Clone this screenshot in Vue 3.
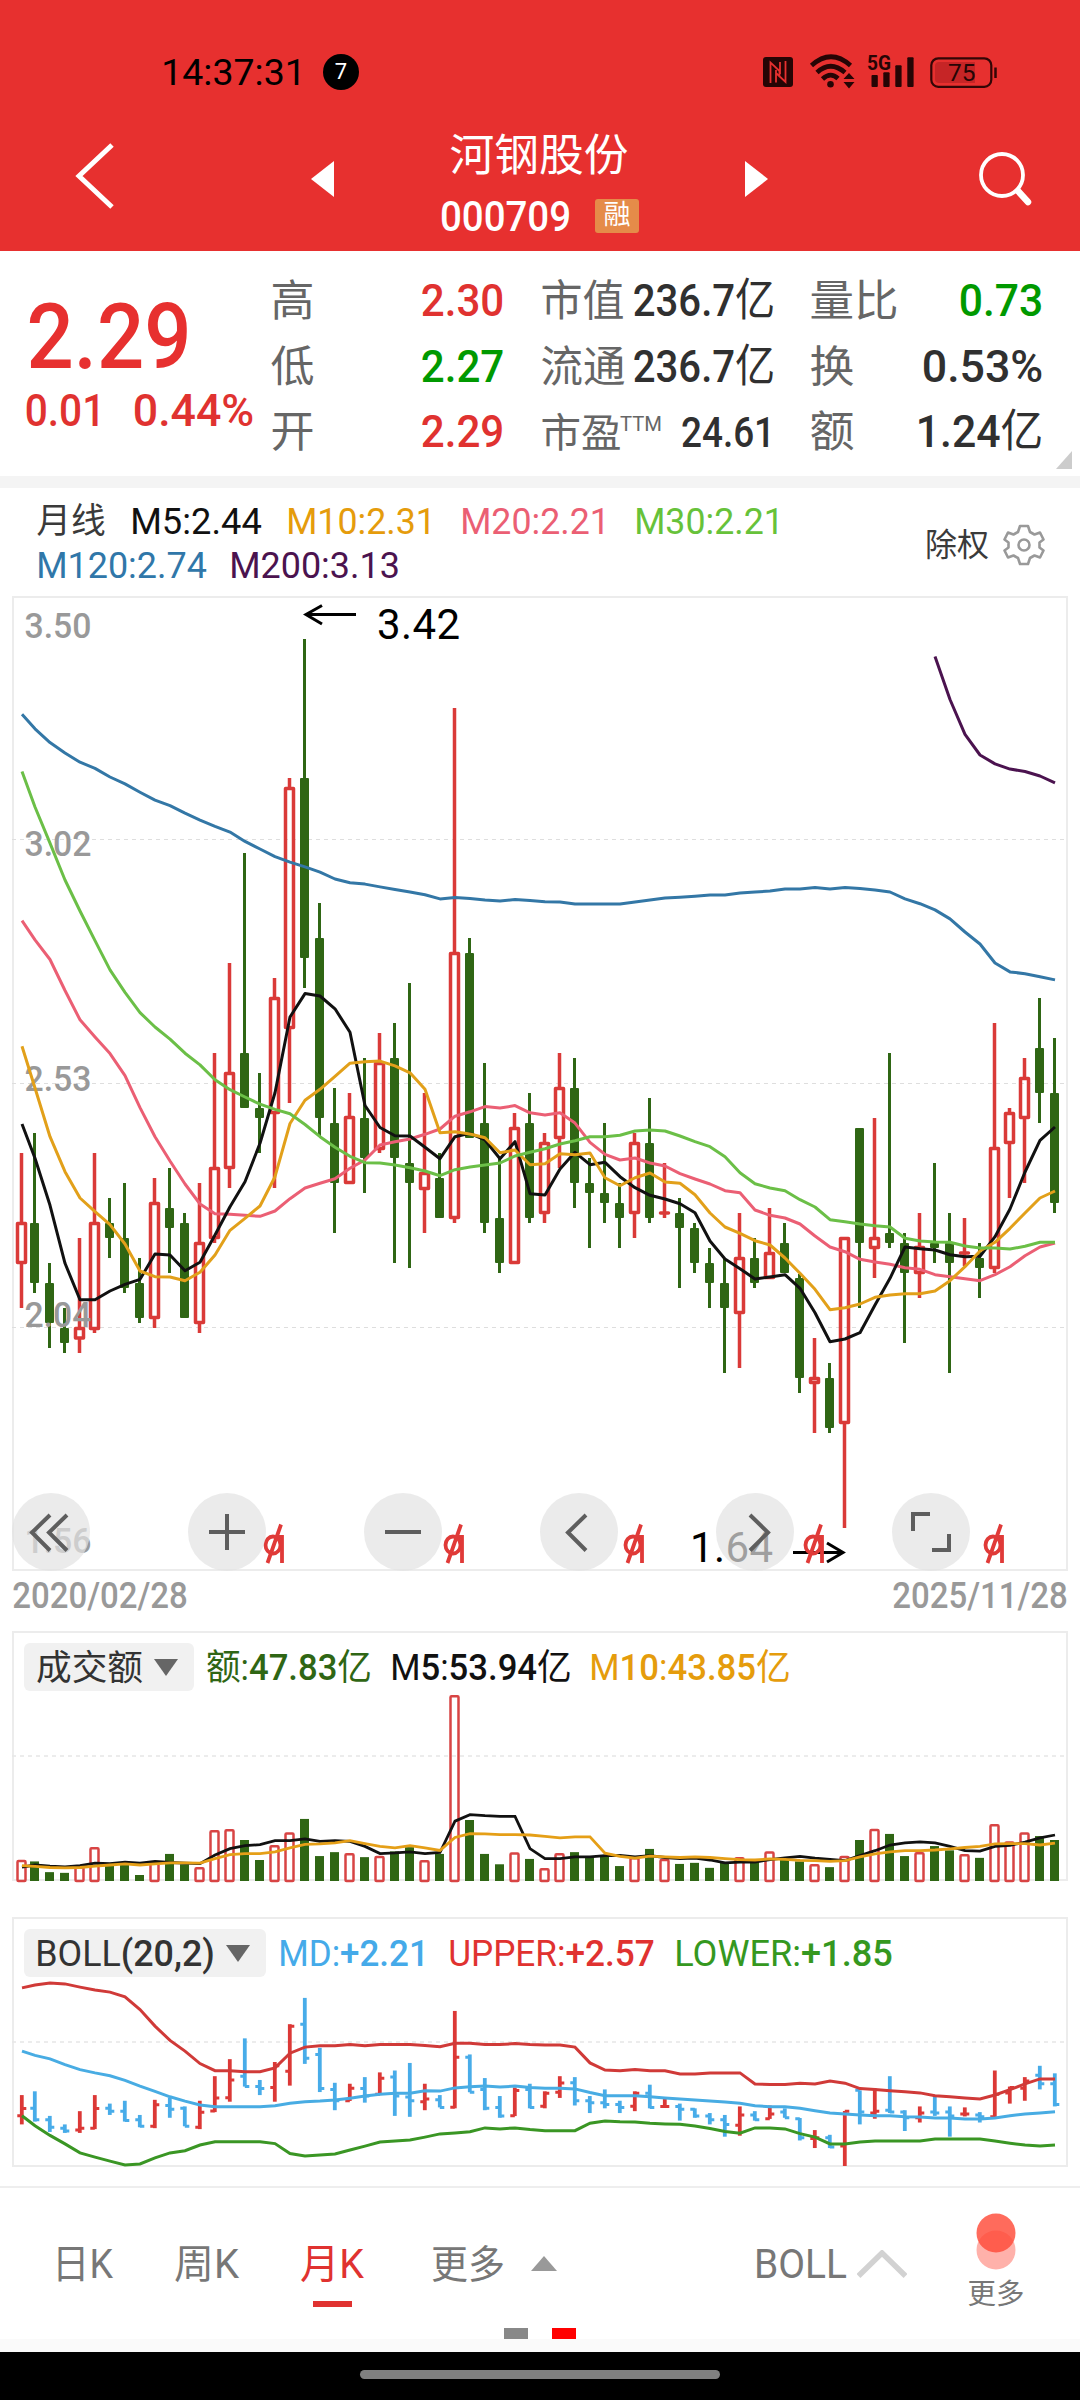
<script setup>
import { h } from 'vue'

// Single-line label fitted to a given width; its box is the cap-height box of the text.
const Fit = (p) => {
  const s = Number(p.s)
  const w = Number(p.w)
  const b = p.b === undefined ? s * 0.05 : Number(p.b)
  const cap = Math.round(s * 0.711)
  const parts = String(p.t).match(/[\d.,+%/()]+|[^\d.,+%/()]+/g)
  return h(
    'svg',
    { width: w, height: cap, style: 'overflow:visible;display:block;flex:none' },
    [
      h(
        'text',
        {
          x: -b,
          y: cap,
          textLength: w + 2 * b,
          lengthAdjust: 'spacingAndGlyphs',
          fill: p.c,
          'font-size': s,
          'font-family': 'Roboto, "Noto Sans CJK SC", sans-serif'
        },
        parts.map((x) => h('tspan', { 'font-weight': p.bold !== undefined && /\d/.test(x) ? 500 : 400 }, x))
      )
    ]
  )
}
Fit.props = ['t', 'w', 's', 'c', 'b', 'bold']

const RED = '#e03230'
const GREEN = '#009900'
const INK = '#303030'

// [kind, high, body top, body bottom, low]
const candles = [
  ['r',1153,1222,1264,1308],['g',1133,1223,1283,1293],['g',1263,1283,1323,1348],['g',1308,1328,1343,1353],['r',1238,1327,1339.5,1353],
  ['r',1153,1222,1330,1333],['g',1198,1223,1238,1258],['g',1183,1238,1288,1293],['g',1258,1283,1318,1323],['r',1178,1202,1319,1328],
  ['g',1168,1208,1228,1273],['g',1213,1223,1318,1318],['r',1183,1242,1324,1333],['r',1053,1167,1239,1243],['r',963,1072,1169,1188],
  ['g',853,1053,1108,1108],['g',1073,1108,1118,1153],['r',978,997,1114,1188],['r',778,787,1029,1103],['g',639,778,958,988],
  ['g',903,938,1118,1137],['g',1088,1123,1183,1233],['r',1093,1116,1184,1184],['g',1058,1118,1158,1193],['r',1033,1062,1150,1153],
  ['g',1023,1058,1158,1263],['g',983,1163,1183,1268],['r',1093,1172,1190,1233],['g',1153,1178,1218,1218],['r',708,952,1219,1223],
  ['g',938,953,1138,1138],['g',1063,1123,1223,1233],['g',1158,1218,1263,1273],['r',1113,1127,1264,1264],['g',1093,1123,1218,1223],
  ['r',1133,1142,1214,1223],['r',1053,1087,1139,1168],['g',1058,1088,1183,1208],['g',1158,1183,1193,1248],['g',1123,1193,1203,1223],
  ['g',1183,1203,1218,1248],['r',1133,1142,1214,1238],['g',1098,1143,1218,1223],['r',1163,1211.5,1214.5,1218],['g',1198,1213,1228,1288],
  ['g',1223,1228,1263,1273],['g',1248,1263,1283,1308],['g',1258,1283,1308,1373],['r',1213,1257,1314,1368],['g',1238,1258,1283,1288],
  ['r',1208,1252,1279,1279],['g',1223,1243,1273,1273],['g',1274,1278,1378,1393],['r',1338,1377,1384,1433],['g',1363,1378,1428,1433],
  ['r',1237,1237,1424,1528],['g',1128,1128,1243,1308],['r',1118,1237,1249,1278],['g',1053,1233,1243,1248],['g',1233,1243,1273,1343],
  ['r',1213,1246,1274,1298],['g',1163,1243,1248,1263],['g',1213,1243,1263,1373],['r',1218,1251.5,1254.5,1266],['g',1243,1258,1268,1298],
  ['r',1023,1147,1269,1273],['r',1108,1112,1144,1198],['r',1058,1077,1119,1183],['g',998,1048,1093,1123],['g',1038,1093,1203,1213]
]

const xAt = (i) => (i === 0 ? 21.5 : 19.5 + 15 * i)

const path = (ys, from = 0) => ys.map((y, k) => `${xAt(k + from) + 0.5},${y.toFixed(1)}`).join(' ')

const averages = [
  { color: '#eb5f74', from: 0, ys: [920.6,939.9,959.5,990.5,1019.8,1037,1053.6,1075.6,1107.6,1136.7,1161,1184,1204,1213.7,1214.3,1215.3,1216.3,1211,1198.7,1188,1183.3,1178.7,1168.3,1160,1145,1141.7,1139,1134.3,1129,1116.2,1111.8,1106.6,1108,1105.6,1112.8,1114.9,1112.8,1123.1,1142.3,1154.3,1160,1158,1163,1166,1173.7,1179,1184,1190.7,1192.7,1210,1215.3,1218,1224,1236,1247,1251.7,1259.3,1262,1264.3,1267.7,1269.3,1274.7,1276.7,1278.7,1280.7,1274.7,1266.7,1255.7,1247,1243] },
  { color: '#111111', from: 0, ys: [1124,1158.3,1205.3,1263.3,1299.7,1299.7,1291,1284.3,1279.3,1254,1255,1270.7,1262.3,1235,1206.7,1181.7,1143.3,1092.8,1017,993.6,996,1008.8,1032.2,1105.5,1127.5,1135.7,1136,1147.3,1158.7,1136.7,1133.3,1140,1158.7,1141.7,1193.7,1195,1169,1152.3,1164.7,1162.3,1176.7,1187.7,1195.3,1199,1203.7,1212.7,1241,1259,1268.7,1279,1277,1274.7,1288.3,1312.7,1341.7,1339,1332.7,1305,1278.3,1247,1248.7,1250,1254.7,1256.7,1256.3,1236.7,1209,1172,1140.3,1127] },
  { color: '#e2a01a', from: 0, ys: [1046.3,1088,1136.7,1171.7,1198,1211.7,1224.7,1244,1271,1276.7,1277,1280.7,1272.3,1255,1230.3,1218.3,1206,1176.7,1123.5,1100.3,1089.3,1076.3,1063.2,1061.8,1061.1,1065.9,1072.8,1089.3,1132.7,1131.7,1134,1137.7,1152.7,1150,1164.7,1163.7,1153.7,1154.7,1153,1177.7,1185.7,1177.7,1173,1182,1183.3,1194.7,1213,1227,1233.3,1240.7,1245,1258,1273.3,1289.3,1309.7,1307.7,1304,1297.3,1295,1293.7,1293.7,1291,1280.7,1266.7,1251,1242.3,1228.3,1213,1198,1191] },
  { color: '#6bbf47', from: 0, ys: [771.5,807,843.1,880,911,940.6,969.9,992.3,1012.6,1027,1039.1,1053.2,1064.9,1079.7,1089.7,1097,1104.2,1109.4,1113.8,1124.5,1136.7,1147.3,1156.3,1162.7,1163,1165,1167.7,1171,1175.7,1169.7,1167,1165,1163,1156,1152.3,1148.7,1144,1140.7,1136.7,1136.7,1135.3,1131,1130,1131,1136,1141.7,1146.7,1156.7,1172.7,1183.7,1188,1190.7,1199.7,1207,1219.7,1221.7,1224,1225.7,1227,1238.3,1241,1242,1242.3,1246,1248,1248,1249,1246.3,1242.3,1242.3] },
  { color: '#3377a6', from: 0, ys: [714.3,728.8,742.6,752.9,762.2,768.4,777,783.9,792.2,800.1,805.6,813.2,820.1,826.3,832.1,841.4,849,856.6,862.1,866.9,872.1,879,882.7,884.1,886.9,889.6,892,894.8,898.9,897.5,898.6,900,901,899.6,900.6,901.7,902,904.1,904.1,904.1,904.1,902,900,897.9,897.2,896.2,895.1,895.1,893.1,892,891,888.9,888.9,887.6,888.9,887.6,888.6,890,892,898.9,903.7,909.9,918.9,932,944,963,971.9,973.7,976.8,979.9] },
  { color: '#4b134f', from: 61, ys: [656.5,699.5,734.3,755,763.9,769.1,771.5,776,782.9] }
]

const axis = [
  { t: '3.50', y: 638 },
  { t: '3.02', y: 856 },
  { t: '2.53', y: 1091 },
  { t: '2.04', y: 1326.5 },
  { t: '1.56', y: 1552.5 }
]

// Lower panes share one vertical unit: 2.8 units per pixel.
const low = (u) => 1620 + u / 2.8

const volumes = [672,676,706,708,690,636,688,685,714,680,655,684,692,589,586,616,672,631,595,557,661,650,653,664,661,648,636,673,655,211,560,655,684,651,669,695,653,650,662,662,689,664,641,669,683,680,694,680,664,678,648,670,676,684,692,661,616,585,599,661,650,633,645,656,666,572,620,595,605,616].map(low)
const volM5 = [692,686,689,691,688,681,682,678,681,676,679,681,682,658,640,632,629,618,618,613,620,618,620,634,654,652,649,654,651,563,545,548,550,550,640,668,668,663,663,660,659,663,660,665,668,667,672,680,678,678,671,666,662,667,670,674,660,646,630,624,621,624,634,646,647,634,631,622,610,602].map(low)
const volM10 = [688,690,693,694,693,689,686,683,686,683,680,680,681,668,657,654,654,649,638,628,627,624,618,626,634,638,632,638,645,609,598,599,601,601,602,606,610,607,607,653,662,667,661,663,665,663,665,668,671,672,669,670,673,674,676,674,663,655,649,646,646,644,641,637,634,627,626,626,630,625].map(low)

const upper = [1030,1022,1016,1019,1028,1036,1042,1055,1091,1137,1177,1207,1242,1262,1262,1265,1265,1254,1213,1196,1192,1192,1189,1192,1189,1189,1189,1191,1195,1185,1185,1189,1189,1186,1189,1190,1190,1196,1240,1260,1262,1259,1262,1262,1271,1271,1268,1268,1268,1299,1301,1301,1297,1299,1291,1297,1312,1315,1318,1321,1324,1332,1335,1338,1341,1330,1315,1299,1285,1285].map(low)
const middle = [1207,1219,1229,1245,1259,1268,1276,1289,1305,1320,1335,1347,1358,1363,1363,1363,1363,1360,1353,1349,1347,1344,1339,1333,1328,1325,1325,1318,1319,1310,1307,1305,1308,1305,1309,1311,1311,1313,1323,1332,1332,1332,1335,1338,1341,1344,1347,1350,1353,1360,1363,1363,1367,1374,1380,1383,1386,1388,1388,1391,1392,1394,1394,1397,1397,1394,1388,1383,1380,1377].map(low)
const lower = [1388,1416,1443,1467,1492,1504,1515,1526,1523,1506,1492,1486,1470,1461,1461,1461,1461,1466,1494,1501,1498,1495,1484,1473,1462,1459,1456,1448,1439,1436,1433,1422,1425,1422,1427,1430,1430,1430,1409,1403,1405,1406,1409,1411,1412,1417,1424,1432,1437,1422,1422,1425,1438,1448,1467,1467,1462,1459,1459,1459,1459,1453,1453,1453,1453,1459,1465,1470,1473,1470].map(low)

const bollY = (p) => 2166 - (1528 - p) * 0.1891
const ohlc = candles.map(([k, hi, top, bot, lo], i) => {
  const up = k === 'r'
  const a = bollY(up ? top + 1.5 : top)
  const b = bollY(up ? bot - 1.5 : bot)
  const x = xAt(i) + 0.3
  const open = up ? b : a
  const close = up ? a : b
  return {
    color: up ? '#dc3836' : '#48ace9',
    bar: `M${x} ${bollY(hi)}V${bollY(lo)}`,
    ticks: `M${x - 4.5} ${open}H${x}M${x} ${close}H${x + 4.5}`
  }
})

const stats = [
  [{ t: '高', w: 41 }, { t: '2.30', w: 79, c: RED }, { t: '市值', w: 81 }, { t: '236.7亿', w: 138, c: INK }, { t: '量比', w: 86 }, { t: '0.73', w: 80, c: GREEN }],
  [{ t: '低', w: 41 }, { t: '2.27', w: 79, c: GREEN }, { t: '流通', w: 82 }, { t: '236.7亿', w: 138, c: INK }, { t: '换', w: 42 }, { t: '0.53%', w: 117, c: INK }],
  [{ t: '开', w: 41 }, { t: '2.29', w: 79, c: RED }, { t: '市盈', w: 78, sup: 'TTM' }, { t: '24.61', w: 90, c: INK, s: 42 }, { t: '额', w: 42 }, { t: '1.24亿', w: 123, c: INK }]
]

const legendTop = [
  { t: '月线', w: 66, s: 35, c: '#3a3a3a' },
  { t: 'M5:2.44', w: 128, s: 36.5, c: '#111' },
  { t: 'M10:2.31', w: 146, s: 36.5, c: '#e59c0c' },
  { t: 'M20:2.21', w: 146, s: 36.5, c: '#eb5f74' },
  { t: 'M30:2.21', w: 146, s: 36.5, c: '#67c23a' }
]
const legendBottom = [
  { t: 'M120:2.74', w: 167, s: 36.5, c: '#3077a9' },
  { t: 'M200:3.13', w: 167, s: 36.5, c: '#4b134f' }
]

const controls = [
  'M38 22L20 39.500L38 57.500M55 22L37 39.500L55 57.500',
  'M39 21V57M21 39H57',
  'M21 39H57',
  'M46 22L28 39.500L46 57.500',
  'M34 22L52 39.500L34 57.500',
  'M38 21H21V38M57 41V57H40'
]
const marks = [264, 444, 624, 804, 984]
</script>

<template>
  <div class="screen">
    <header class="top">
      <div class="status">
        <Fit t="14:37:31" w="141" s="36.5" c="#000" />
        <span class="badge">7</span>
        <svg class="sys" width="236" height="36" viewBox="762 54 236 36">
          <rect x="763" y="57" width="30" height="30" rx="3" fill="#260505" />
          <path d="M770.500 83V62.500L779.500 71V76M776 70V82.500M785.500 61V82L776.500 73.500M780 62V74" fill="none" stroke="#e7302f" stroke-width="1.800" />
          <g fill="none" stroke="#260505" stroke-width="4.700">
            <path d="M811.500 65.500Q831 48 850.500 65.500" />
            <path d="M817 72.500Q830.500 60 845 72.500" />
            <path d="M822.500 79Q830.500 71.500 838 78.500" />
          </g>
          <circle cx="830.500" cy="84.300" r="3.300" fill="#260505" />
          <path d="M843.500 79L849 73L854.500 79ZM843.500 82L849 88.500L854.500 82Z" fill="#260505" />
          <text x="867" y="70" textLength="24" lengthAdjust="spacingAndGlyphs" font-size="20" font-weight="700" font-family="Roboto, sans-serif" fill="#260505">5G</text>
          <g fill="#260505">
            <rect x="871.500" y="75" width="6.300" height="12" rx="1" />
            <rect x="883.300" y="72.300" width="6.300" height="14.700" rx="1" />
            <rect x="895.300" y="65.300" width="6.300" height="21.700" rx="1" />
            <rect x="907.300" y="57.300" width="6.300" height="29.700" rx="1" />
          </g>
          <path d="M939 62H975V83H939Q935 83 935 79V66Q935 62 939 62Z" fill="#c62526" />
          <rect x="931.300" y="58.300" width="60" height="28.500" rx="7" fill="none" stroke="#330606" stroke-width="2.200" />
          <path d="M995.500 67.500V78" stroke="#330606" stroke-width="2.500" />
          <text x="948" y="81" textLength="27.500" lengthAdjust="spacingAndGlyphs" font-size="24.500" font-family="Roboto, sans-serif" fill="#260505">75</text>
        </svg>
      </div>
      <div class="titlebar">
        <svg class="back" width="48" height="74" viewBox="70 139 48 74"><path d="M112 145L79 176L112 207" fill="none" stroke="#fff" stroke-width="5" /></svg>
        <svg class="prev" width="24" height="36" viewBox="0 0 24 36"><path d="M24 0V36L1 18Z" fill="#fff" /></svg>
        <div class="name">
          <Fit t="河钢股份" w="176" s="44.500" c="#fff" b="1.500" />
          <div class="code">
            <Fit t="000709" w="127" s="42" c="#fff" bold />
            <span class="tag">融</span>
          </div>
        </div>
        <svg class="next" width="24" height="36" viewBox="0 0 24 36"><path d="M0 0V36L23 18Z" fill="#fff" /></svg>
        <svg class="search" width="56" height="60" viewBox="976 148 56 60">
          <circle cx="1002" cy="175" r="21" fill="none" stroke="#fff" stroke-width="3.800" />
          <path d="M1018 191L1028 202" stroke="#fff" stroke-width="6.500" stroke-linecap="round" />
        </svg>
      </div>
    </header>

    <section class="quote">
      <div class="price">
        <Fit t="2.29" w="156" s="90" c="#e7302f" bold />
        <div class="change">
          <Fit t="0.01" w="76" s="45" c="#e03230" bold />
          <Fit t="0.44%" w="117" s="45" c="#e03230" bold />
        </div>
      </div>
      <div class="stats">
        <div v-for="(row, r) in stats" :key="r" class="stat-row">
          <div v-for="g in 3" :key="g" class="stat">
            <div class="lab">
              <Fit :t="row[g * 2 - 2].t" :w="row[g * 2 - 2].w" :s="row[g * 2 - 2].sup ? 40 : 43.5" c="#666" b="1.500" />
              <Fit v-if="row[g * 2 - 2].sup" class="sup" t="TTM" w="40" s="20" c="#666" />
            </div>
            <Fit :t="row[g * 2 - 1].t" :w="row[g * 2 - 1].w" :s="row[g * 2 - 1].s || 45" :c="row[g * 2 - 1].c" bold />
          </div>
        </div>
      </div>
      <svg class="corner" width="16" height="18"><path d="M16 0V18H0Z" fill="#ccc" /></svg>
    </section>

    <section class="legend">
      <div class="legend-rows">
        <div class="legend-row"><Fit v-for="m in legendTop" :key="m.t" v-bind="m" /></div>
        <div class="legend-row second"><Fit v-for="m in legendBottom" :key="m.t" v-bind="m" /></div>
      </div>
      <div class="adjust">
        <Fit t="除权" w="62" s="32" c="#3a3a3a" b="1" />
        <svg width="42" height="42" viewBox="-21 -21 42 42" fill="none" stroke="#999" stroke-width="2.600" stroke-linejoin="round">
          <path d="M-4 -19H4L6 -13L10.500 -10.500L16 -12.500L19.500 -5.500L15.500 -2.500V2.500L19.500 5.500L16 12.500L10.500 10.500L6 13L4 19H-4L-6 13L-10.500 10.500L-16 12.500L-19.500 5.500L-15.500 2.500V-2.500L-19.500 -5.500L-16 -12.500L-10.500 -10.500L-6 -13Z" />
          <circle r="5.500" />
        </svg>
      </div>
    </section>

    <section class="pane">
      <svg width="1080" height="985" viewBox="0 590 1080 985">
        <rect x="13" y="597" width="1054" height="973" fill="none" stroke="#ececec" stroke-width="2" />
        <path d="M12 839.500H1066M12 1083.500H1066M12 1327.500H1066" stroke="#dedede" stroke-dasharray="4 4" />
        <template v-for="(c, i) in candles" :key="i">
          <g v-if="c[0] === 'g'" fill="#2f6614">
            <rect :x="xAt(i) - 1.5" :y="c[1]" width="3" :height="c[4] - c[1]" />
            <rect :x="xAt(i) - 4.5" :y="c[2]" width="9" :height="c[3] - c[2]" rx="1" />
          </g>
          <g v-else fill="none" stroke="#da3a38" stroke-width="3.500">
            <path :d="`M${xAt(i)} ${c[1]}V${c[2] + 1}M${xAt(i)} ${c[3] - 1}V${c[4]}`" />
            <rect :x="xAt(i) - 4" :y="c[2] + 1.5" width="8" :height="Math.max(c[3] - c[2] - 3, 0.1)" stroke-linejoin="round" />
          </g>
        </template>
        <text v-for="a in axis" :key="a.t" x="24.500" :y="a.y" textLength="67" lengthAdjust="spacingAndGlyphs" class="axis">{{ a.t }}</text>
        <polyline v-for="m in averages" :key="m.color" :points="path(m.ys, m.from)" fill="none" :stroke="m.color" stroke-width="3" stroke-linejoin="round" />
        <g fill="none" stroke="#000" stroke-width="3">
          <path d="M356 614.500H306M322 605.500L306 614.500L322 624" />
          <path d="M793 1552.500H843M827 1543L843 1552.500L827 1562" />
        </g>
        <text x="377" y="639" textLength="83" class="note">3.42</text>
        <text x="690" y="1562" textLength="83" class="note">1.64</text>
        <g v-for="m in marks" :key="m" :transform="`translate(${m} 1524)`" fill="none" stroke="#e03a38" stroke-width="3.800">
          <ellipse cx="9" cy="21" rx="7.500" ry="8.500" />
          <path d="M14 13H18V39M17 0.500L3.500 39" />
        </g>
      </svg>
      <div class="controls">
        <svg v-for="d in controls" :key="d" width="78" height="78" viewBox="0 0 78 78">
          <circle cx="39" cy="39" r="39" fill="rgb(227,227,227)" fill-opacity="0.700" />
          <path :d="d" fill="none" stroke="#5e5e5e" stroke-width="4" />
        </svg>
      </div>
    </section>

    <div class="dates">
      <Fit t="2020/02/28" w="172" s="36" c="#999" bold />
      <Fit t="2025/11/28" w="172" s="36" c="#999" bold />
    </div>

    <section class="pane">
      <svg width="1080" height="280" viewBox="0 1620 1080 280">
        <rect x="13" y="1632" width="1054" height="248" fill="none" stroke="#ececec" stroke-width="2" />
        <path d="M12 1756H1066" stroke="#e6e6e6" stroke-width="1.500" stroke-dasharray="4 4" />
        <template v-for="(c, i) in candles" :key="i">
          <rect v-if="c[0] === 'g'" :x="xAt(i) - 4.5" :y="volumes[i]" width="9" :height="1881 - volumes[i]" fill="#2f6614" />
          <rect v-else :x="xAt(i) - 4" :y="volumes[i] + 1" width="8" :height="1880 - volumes[i]" rx="1" fill="none" stroke="#d84444" stroke-width="2.500" />
        </template>
        <polyline :points="path(volM5)" fill="none" stroke="#111" stroke-width="2.800" />
        <polyline :points="path(volM10)" fill="none" stroke="#e59f17" stroke-width="2.800" />
      </svg>
      <div class="pane-head volume-head">
        <div class="chip">
          <Fit t="成交额" w="105" s="35.500" c="#333" b="1" />
          <svg width="24" height="17"><path d="M0 0H24L12 17Z" fill="#666" /></svg>
        </div>
        <Fit t="额:47.83亿" w="164" s="36" c="#2f6614" b="1" bold />
        <Fit t="M5:53.94亿" w="178" s="36" c="#111" bold />
        <Fit t="M10:43.85亿" w="198" s="36" c="#e59c0c" bold />
      </div>
    </section>

    <section class="pane">
      <svg width="1080" height="286" viewBox="0 1900 1080 286">
        <rect x="13" y="1918" width="1054" height="248" fill="none" stroke="#ececec" stroke-width="2" />
        <path d="M12 2042H1066" stroke="#e6e6e6" stroke-width="1.500" stroke-dasharray="4 4" />
        <g v-for="(b, i) in ohlc" :key="i" fill="none" :stroke="b.color">
          <path :d="b.bar" stroke-width="3.800" />
          <path :d="b.ticks" stroke-width="3" />
        </g>
        <polyline :points="path(upper)" fill="none" stroke="#d03a38" stroke-width="3" />
        <polyline :points="path(middle)" fill="none" stroke="#48ace3" stroke-width="3" />
        <polyline :points="path(lower)" fill="none" stroke="#3a9624" stroke-width="3" />
      </svg>
      <div class="pane-head boll-head">
        <div class="chip wide">
          <Fit t="BOLL(20,2)" w="176" s="36" c="#333" bold />
          <svg width="24" height="17"><path d="M0 0H24L12 17Z" fill="#666" /></svg>
        </div>
        <Fit t="MD:+2.21" w="147" s="36.500" c="#45aae9" bold />
        <Fit t="UPPER:+2.57" w="203" s="36.500" c="#e03230" bold />
        <Fit t="LOWER:+1.85" w="215" s="36.500" c="#35981f" bold />
      </div>
    </section>

    <nav class="tabs">
      <div class="periods">
        <Fit t="日K" w="57" s="40" c="#777" />
        <Fit t="周K" w="61" s="40" c="#777" />
        <div class="active"><Fit t="月K" w="60" s="40" c="#e03230" /></div>
        <Fit t="更多" w="72" s="39" c="#777" b="1" />
        <svg width="26" height="15"><path d="M0 15H26L13 0Z" fill="#999" /></svg>
      </div>
      <div class="indicator">
        <Fit t="BOLL" w="89" s="40" c="#777" />
        <svg width="50" height="28"><path d="M1.500 26L25 3L48.500 26" fill="none" stroke="#d2d2d2" stroke-width="5.500" /></svg>
      </div>
      <div class="more">
        <svg width="40" height="57">
          <circle cx="20" cy="37" r="19.500" fill="#ffb1aa" />
          <circle cx="20" cy="20" r="19.500" fill="#ff4a38" fill-opacity="0.820" />
        </svg>
        <span>更多</span>
      </div>
      <div class="pager"><i></i><i class="on"></i></div>
    </nav>
    <div class="strip"></div>
    <footer class="home"><span></span></footer>
  </div>
</template>

<style>
body { background: #fff; }
</style>

<style scoped>
.screen { width: 1080px; height: 2400px; overflow: hidden; display: flex; flex-direction: column; background: #fff; font-family: Roboto, "Noto Sans CJK SC", sans-serif; }
.screen > * { flex: none; box-sizing: border-box; }
.top { height: 251px; background: #e7302f; }
.status { display: flex; align-items: center; height: 36px; padding: 54px 82px 0 163px; }
.badge { width: 36px; height: 36px; margin-left: 19px; border-radius: 50%; background: #000; color: #fff; font-size: 22px; line-height: 36px; text-align: center; }
.sys { margin-left: auto; }
.titlebar { display: flex; align-items: flex-start; height: 161px; }
.back { margin: 49px 0 0 70px; }
.prev { margin: 71px 0 0 192px; }
.name { margin: 49px 0 0 105px; width: 208px; }
.name > svg { margin-left: 12px; }
.code { display: flex; align-items: center; gap: 26px; height: 34px; margin: 28px 0 0 3px; }
.tag { flex: none; width: 44px; height: 34px; border-radius: 3px; background: #e58b49; color: #fff; font-size: 27px; line-height: 33px; text-align: center; }
.next { margin: 71px 0 0 98px; }
.search { margin: 58px 0 0 207px; }
.quote { height: 225px; display: flex; position: relative; }
.price { width: 272px; padding: 53px 0 0 27px; box-sizing: border-box; }
.price > svg { margin-left: 4px; }
.change { display: flex; gap: 32px; margin-top: 26px; }
.stats { display: flex; flex-direction: column; gap: 33.5px; padding-top: 33px; }
.stat-row { display: flex; height: 32px; }
.stat { display: flex; justify-content: space-between; align-items: flex-end; width: 230px; margin-right: 40px; }
.stat:nth-child(3) { margin-right: 0; }
.stat:nth-child(2) { width: 231px; margin-right: 38px; }
.lab { display: flex; }
.sup { margin-left: 0.5px; margin-top: -2px; }
.corner { position: absolute; right: 8px; bottom: 7px; }
.legend { height: 114px; border-top: 12px solid #f4f4f4; display: flex; justify-content: space-between; padding: 20px 35px 0 38px; }
.legend-row { display: flex; gap: 28px; height: 26px; margin-bottom: 18px; }
.second { gap: 26px; }
.adjust { display: flex; align-items: center; gap: 15px; height: 73px; }
.pane { position: relative; }
.pane > svg { display: block; }
.axis { font: 500 35px Roboto, sans-serif; fill: #999; }
.note { font: 400 42px Roboto, sans-serif; fill: #000; }
.controls { position: absolute; left: 12px; top: 903px; display: flex; gap: 98px; }
.dates { height: 45px; display: flex; justify-content: space-between; padding: 7px 14px 0 14px; }
.pane-head { position: absolute; left: 24px; display: flex; align-items: center; }
.volume-head { top: 23px; gap: 21px; }
.boll-head { top: 29px; gap: 23px; }
.chip { display: flex; align-items: center; justify-content: space-between; width: 170px; height: 48px; padding: 0 16px 0 13px; box-sizing: border-box; border-radius: 6px; background: #f1f1f1; margin-right: -8px; }
.chip.wide { width: 242px; margin-right: -9px; }
.tabs { position: relative; height: 153px; border-top: 2px solid #eee; display: flex; }
.periods { display: flex; align-items: flex-start; padding: 62px 0 0 54px; width: 756px; box-sizing: border-box; }
.periods > * { margin-right: 65px; }
.periods > .active { width: 60px; height: 51px; display: flex; flex-direction: column; justify-content: space-between; align-items: center; margin-right: 70px; }
.periods > .active::after { content: ""; width: 39px; height: 6px; margin-bottom: -6px; background: #e03230; }
.periods > svg:nth-of-type(3) { margin-right: 27px; }
.periods > svg:last-child { margin: 6px 0 0; }
.indicator { display: flex; align-items: flex-start; gap: 12px; padding-top: 62px; width: 212px; }
.more { width: 56px; display: flex; flex-direction: column; align-items: center; padding-top: 25px; color: #777; font-size: 28.500px; line-height: 34px; white-space: nowrap; }
.more span { margin-top: 8px; }
.pager { position: absolute; left: 504px; bottom: 0; display: flex; gap: 24px; }
.pager i { width: 24px; height: 11px; background: #888; }
.pager .on { background: #f00; }
.strip { height: 13px; background: #fafafa; }
.home { height: 48px; background: #000; display: flex; justify-content: center; padding-top: 18px; }
.home span { width: 360px; height: 9px; border-radius: 5px; background: #808080; }
</style>
